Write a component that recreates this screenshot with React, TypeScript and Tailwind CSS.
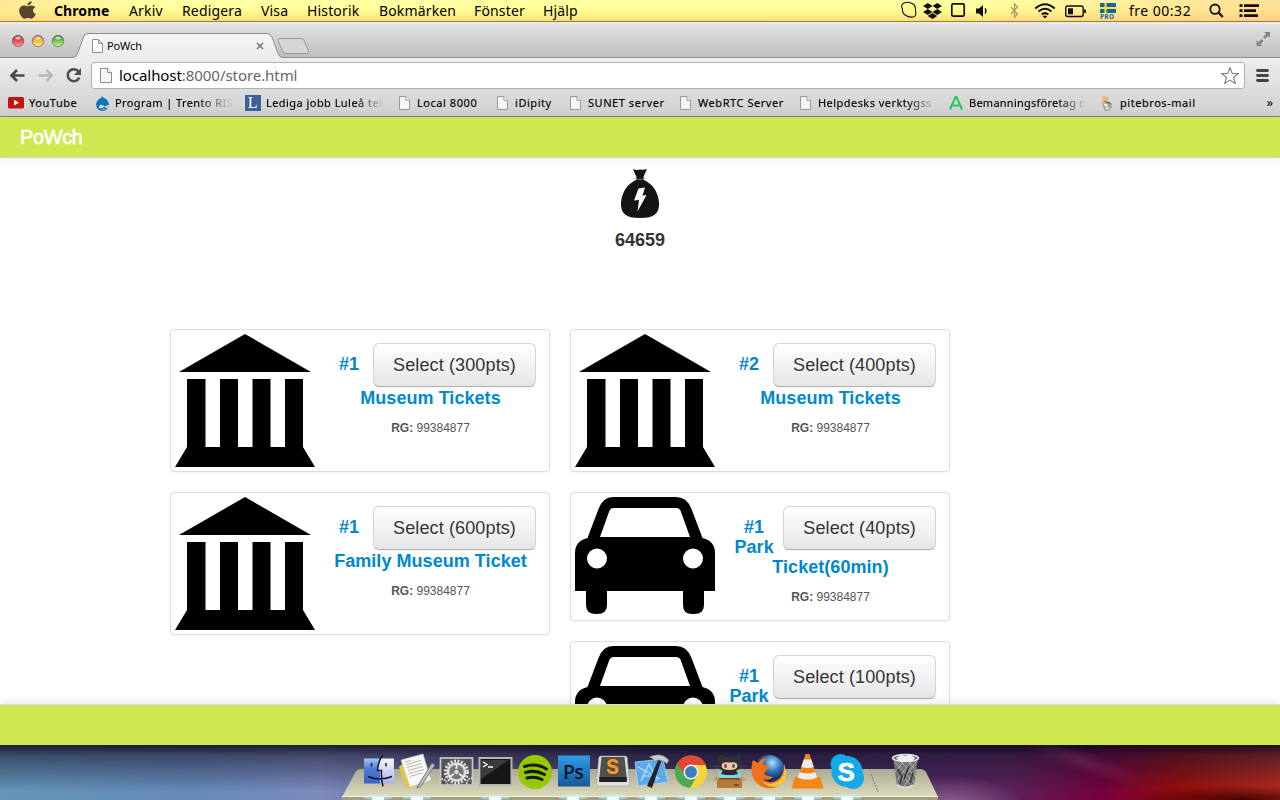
import React from 'react';
import type { ReactNode } from 'react';
import { FaApple, FaDropbox, FaDrupal } from 'react-icons/fa';

function PageIcon({ className }: { className: string }) {
  return (
    <svg viewBox="0 0 12 15" className={className} fill="#f7f7f7" stroke="#8c8c8c" strokeWidth="1">
      <path d="M.5.5H7.5L11.5 4.5V14.5H.5Z" />
      <path d="M7.5.5V4.5H11.5" fill="#fff" />
    </svg>
  );
}

const menus = [
  { label: 'Arkiv', w: 'w-[53px]' },
  { label: 'Redigera', w: 'w-[79px]' },
  { label: 'Visa', w: 'w-[46px]' },
  { label: 'Historik', w: 'w-[72px]' },
  { label: 'Bokmärken', w: 'w-[95px]' },
  { label: 'Fönster', w: 'w-[69px]' },
  { label: 'Hjälp', w: 'w-[60px]' },
];

function MenuBar() {
  return (
    <div className="flex h-[22px] shrink-0 items-center border-b border-[#a07830] bg-[linear-gradient(100deg,rgba(255,215,140,.55),rgba(255,255,140,0)_12%,rgba(255,255,140,0)_75%,rgba(255,190,140,.5)),linear-gradient(#ffffa8,#ffff94_45%,#ffde7c)] text-[14px] tracking-[.15px] text-black">
      <FaApple className="mb-px ml-[19px] h-[20px] w-[17px] text-[#55462a]" preserveAspectRatio="none" />
      <b className="ml-[18px] w-[75px] font-bold tracking-[.1px]">Chrome</b>
      {menus.map((m) => (
        <span key={m.label} className={m.w}>{m.label}</span>
      ))}
      <div className="ml-auto flex h-[22px] items-center">
        <svg width="380" height="22" viewBox="900 0 380 22" fill="none" stroke="#111">
          <path d="M904.500 2.800Q909 1.500 911.500 3.300q4.500 1.500 4 7.500 1.500 5.500-2.500 6.200-4.500.5-7-1.500-4-1.500-3.500-6.500-2.500-4.500 2-6.200Z" strokeWidth="1.100" />
          <rect x="951.800" y="3.800" width="12.400" height="12.400" rx="1.500" strokeWidth="1.700" />
          <path d="M976 8.500h3l4-3.500v12l-4-3.500h-3Z" fill="#111" stroke="none" />
          <path d="M985 8.500q2 2.500 0 5" strokeWidth="1.300" />
          <path d="m1011 7 6.500 7-3 3.500V4l3 3-6.500 7" stroke="#a19766" strokeWidth="1.200" />
          <path d="M1035.300 8.500q9.700-8.500 19.400 0" strokeWidth="2.100" />
          <path d="M1038.500 11.500q6.500-5.500 13 0M1041.700 14.500q3.300-2.700 6.600 0" strokeWidth="2" />
          <path d="m1042.800 16.200 2.200 2.300 2.200-2.300q-2.200-1.500-4.400 0Z" fill="#111" stroke="none" />
          <rect x="1065.700" y="6" width="17.500" height="10.500" rx="2" strokeWidth="1.400" />
          <path d="M1068 8.300h5v6h-5Z" fill="#111" stroke="none" />
          <path d="M1085 9.500v3.500" strokeWidth="1.800" />
          <path d="M1100 3h16v10h-16Z" fill="#17629f" stroke="none" />
          <path d="M1100 8h16M1105.500 3v10" stroke="#ffe33d" strokeWidth="2" />
          <circle cx="1215" cy="9.200" r="4.700" strokeWidth="1.800" />
          <path d="m1218.500 12.500 4.300 4.500" strokeWidth="2.300" />
          <path d="M1244 5.700h15M1244 10.700h12M1244 15.700h14" strokeWidth="2.800" />
          <path d="M1239.500 5.700h3M1239.500 10.700h3M1239.500 15.700h3" strokeWidth="2.800" />
          <text x="1100" y="19.200" fontSize="6.500" fontWeight="700" fill="#17629f" stroke="none" letterSpacing=".3">PRO</text>
          <text x="1129" y="16" fontSize="14" fill="#000" stroke="none" letterSpacing=".5">fre 00:32</text>
          <FaDropbox x="923" y="1.500" size={19} color="#111" />
        </svg>
      </div>
    </div>
  );
}

function TabStrip() {
  return (
    <div className="h-[37px] shrink-0 bg-[linear-gradient(#eee,#dedede_15%,#bdbdbd)]">
      <svg width="1280" height="37" viewBox="0 22 1280 37">
        <defs>
          <linearGradient id="red" x2="0" y2="1"><stop stopColor="#a43a40" /><stop offset=".4" stopColor="#e63f4c" /><stop offset="1" stopColor="#ff9c9c" /></linearGradient>
          <linearGradient id="yellow" x2="0" y2="1"><stop stopColor="#a46b2c" /><stop offset=".4" stopColor="#f3b43b" /><stop offset="1" stopColor="#fff08a" /></linearGradient>
          <linearGradient id="green" x2="0" y2="1"><stop stopColor="#477a37" /><stop offset=".4" stopColor="#62bd47" /><stop offset="1" stopColor="#c8f59c" /></linearGradient>
          <linearGradient id="tab" x2="0" y2="1"><stop stopColor="#f5f5f5" /><stop offset="1" stopColor="#ececec" /></linearGradient>
        </defs>
        <path d="M0 57.500H1280" stroke="#8d8d8d" />
        <path d="M0 58.500H1280" stroke="#f0f0f0" />
        <path d="M70 59V57.500H73q3 0 4.500-4L83.500 37q1.300-3.500 4.500-3.500H267q3.500 0 5 3.500l6 16.500q1.500 4 5 4v1.500Z" fill="url(#tab)" />
        <path d="M70 57.500H73q3 0 4.500-4L83.500 37q1.300-3.500 4.500-3.500H267q3.500 0 5 3.500l6 16.500q1.500 4 5 4" fill="none" stroke="#8d8d8d" />
        <path d="M279 38.500H301q2.500 0 3.500 2.500l4 10q1 2.500-1.500 2.500H286q-2.500 0-3.500-2.500L278 40.500q-.8-2 1-2Z" fill="#d5d5d5" stroke="#999" />
        {['red', 'yellow', 'green'].map((c, i) => (
          <g key={c}>
            <circle cx={18 + i * 20} cy="41" r="5.700" fill={`url(#${c})`} stroke="#68604f" strokeWidth=".7" />
            <ellipse cx={18 + i * 20} cy="38" rx="2.800" ry="1.500" fill="#fff" opacity=".65" />
          </g>
        ))}
        <path d="M92.500 39.500h6l4 4v9h-10ZM98.500 39.500v4h4" fill="#fff" stroke="#919191" />
        <path d="m257 43 6 6m0-6-6 6" stroke="#777" strokeWidth="1.600" />
        <text x="107" y="50" fontSize="11" fill="#000" letterSpacing="-.1">PoWch</text>
        <path d="m1264 32h6v6l-2-2-3 3-2-2 3-3ZM1256.500 40v6h6l-2-2 3-3-2-2-3 3Z" fill="#858585" />
      </svg>
    </div>
  );
}

function Toolbar() {
  return (
    <div className="flex h-[31px] shrink-0 bg-[linear-gradient(#ededed,#dcdcdc)] pt-[3px]">
      <svg width="91" height="28" viewBox="0 62 91 28" fill="none">
        <path d="M24.500 75.500H11.500M17 70l-5.500 5.500L17 81" stroke="#484848" strokeWidth="2.600" />
        <path d="M38.500 75.500H51.500M46.500 70l5.500 5.500-5.500 5.500" stroke="#b5b5b5" strokeWidth="2.300" />
        <path d="M78.500 71.500a6 6 0 1 0 .8 6" stroke="#4d4d4d" strokeWidth="2.500" />
        <path d="M81 68v7h-7Z" fill="#4d4d4d" />
      </svg>
      <div className="flex h-[27px] w-[1154px] items-center rounded-[3px] border border-[#b3b3b3] bg-white pl-[8px] text-[15px] text-[#666]">
        <PageIcon className="h-[15px] w-[12px]" />
        <span className="ml-[7px] tracking-[-.06px]"><span className="text-black">localhost</span>:8000/store.html</span>
        <svg width="20" height="20" viewBox="0 0 20 20" className="mr-[4px] ml-auto" fill="none" stroke="#7d7d7d" strokeWidth="1.100">
          <path d="m10 1.500 2.200 5.900 6.300.2-5 3.900 1.800 6.100-5.300-3.500-5.300 3.500 1.800-6.100-5-3.900 6.300-.2Z" strokeLinejoin="round" />
        </svg>
      </div>
      <svg width="35" height="28" viewBox="1245 62 35 28" stroke="#444" strokeWidth="2.800" strokeLinecap="round">
        <path d="M1257.500 70.500h10M1257.500 75.500h10M1257.500 80.500h10" />
      </svg>
    </div>
  );
}

type Bookmark = { label: string; w: string; iconW?: string; icon?: ReactNode; fade?: string };

const bookmarks: Bookmark[] = [
  {
    label: 'YouTube', w: 'w-[87px]', iconW: 'w-[21px]',
    icon: <svg width="16" height="12" viewBox="0 0 16 12"><rect width="16" height="11.500" rx="1.500" fill="#c4140e" /><path d="m6 3 5 2.700L6 8.500Z" fill="#fff" /></svg>,
  },
  {
    label: 'Program | Trento RIS', w: 'w-[150px]', iconW: 'w-[20px]',
    icon: <FaDrupal className="h-[17px] w-[15px] text-[#0e76b5]" />,
    fade: 'w-[118px] tracking-[.4px] [mask-image:linear-gradient(to_right,#000_70%,transparent)]',
  },
  {
    label: 'Lediga jobb Luleå tek', w: 'w-[154px]', iconW: 'w-[21px]',
    icon: <span className="flex h-[16px] w-[16px] items-center justify-center bg-[#3c6098] font-['Liberation_Serif'] text-[16px] text-white">L</span>,
    fade: 'w-[118px] tracking-[.45px] [mask-image:linear-gradient(to_right,#000_75%,transparent)]',
  },
  { label: 'Local 8000', w: 'w-[98px]' },
  { label: 'iDipity', w: 'w-[73px]' },
  { label: 'SUNET server', w: 'w-[110px]' },
  { label: 'WebRTC Server', w: 'w-[120px]' },
  { label: 'Helpdesks verktygss', w: 'w-[149px]', fade: 'w-[118px] tracking-[.45px] [mask-image:linear-gradient(to_right,#000_75%,transparent)]' },
  {
    label: 'Bemanningsföretag o', w: 'w-[151px]', iconW: 'w-[20px]',
    icon: <svg width="14" height="14" viewBox="0 0 14 14" fill="none" stroke="#22c65b" strokeWidth="2"><path d="M1 13.500 6.500 1h1L13 13.500M4 9.500h6" /></svg>,
    fade: 'w-[118px] tracking-[.25px] [mask-image:linear-gradient(to_right,#000_75%,transparent)]',
  },
  {
    label: 'pitebros-mail', w: 'w-[130px]', iconW: 'w-[20px]',
    icon: (
      <svg width="14" height="17" viewBox="0 0 14 17">
        <path d="m2 1 2 1 2-1 1 2 2-1-1 4H3Z" fill="#f1ae72" />
        <path d="m2 7 5-1 4 3 1 3-3 4H5l-2-4Z" fill="#aaa99c" />
        <path d="m3 8 5 2-2 2Z" fill="#fff" /><path d="m3 6 7 1 2 3-3-1Z" fill="#70813b" /><path d="m5 13 4-1-1 3Z" fill="#fafafa" />
      </svg>
    ),
  },
];

function BookmarkBar() {
  return (
    <div className="flex h-[27px] shrink-0 items-center border-b border-[#858585] bg-[linear-gradient(#dcdcdc,#d0d0d0)] pl-[8px] text-[11px] tracking-[.55px] text-black">
      {bookmarks.map((b) => (
        <div key={b.label} className={`flex shrink-0 items-center ${b.w}`}>
          <span className={`shrink-0 ${b.iconW ?? 'w-[18px]'}`}>
            {b.icon ?? <PageIcon className="h-[14px] w-[11px]" />}
          </span>
          <span className={`whitespace-nowrap [-webkit-text-stroke:.15px_black] ${b.fade ?? ''}`}>{b.label}</span>
        </div>
      ))}
      <span className="mr-[7px] ml-auto text-[13px] tracking-normal">»</span>
    </div>
  );
}

function Museum() {
  return (
    <svg width="140" height="133" viewBox="0 0 140 133" className="block shrink-0">
      <path d="m70 0 66 38H4Z M12 45h18.500v68H45V45h18v68h14.500V45h18v68H110V45h18v68l12 20H0l12-20Z" />
    </svg>
  );
}

function Car() {
  return (
    <svg width="140" height="119" viewBox="0 0 140 119" className="block shrink-0">
      <path
        fillRule="evenodd"
        d="M38 0h63q11 0 15.500 12l11 29q12.500 3 12.500 15v38h-11v14q0 9-10 9h-2q-9 0-9-9V94H32v14q0 9-10 9h-1q-10 0-10-9V94H0V56q0-12 12.500-15l11-29Q28 0 38 0Zm.5 11q-3 0-4 2.500L25 40h90l-9.500-26.500q-1-2.500-4-2.500ZM22 51.500a10 10 0 1 0 0 20 10 10 0 0 0 0-20Zm96 0a10 10 0 1 0 0 20 10 10 0 0 0 0-20Z"
      />
    </svg>
  );
}

type Ticket = { kind: 'museum' | 'car'; title: string; points: number };

function TicketCard({ kind, title, points }: Ticket) {
  return (
    <div className="flex rounded-[4px] border border-[#ddd] bg-white p-[4px] shadow-[0_1px_3px_rgba(0,0,0,.055)]">
      {kind === 'museum' ? <Museum /> : <Car />}
      <div className="ml-[10px] w-[211px] pt-[9px] text-center">
        <button className="float-right mb-px h-[44px] rounded-[6px] border border-[#d4d4d4] border-b-[#b3b3b3] bg-[linear-gradient(#fff,#e6e6e6)] px-[19px] text-[18px] leading-[20px] tracking-[.12px] text-[#333] shadow-[inset_0_1px_0_rgba(255,255,255,.2),0_1px_2px_rgba(0,0,0,.05)] [text-shadow:0_1px_1px_rgba(255,255,255,.75)]">
          Select ({points}pts)
        </button>
        <h3 className="pt-[11px] text-[18px] leading-[20px] font-bold tracking-[.05px] text-[#0088cc]">{title}</h3>
        <p className="mt-[10px] text-[12px] leading-[20px] text-[#555]"><b>RG:</b> 99384877</p>
      </div>
    </div>
  );
}

const columns: Ticket[][] = [
  [
    { kind: 'museum', title: '#1 Museum Tickets', points: 300 },
    { kind: 'museum', title: '#1 Family Museum Ticket', points: 600 },
  ],
  [
    { kind: 'museum', title: '#2 Museum Tickets', points: 400 },
    { kind: 'car', title: '#1 Park Ticket(60min)', points: 40 },
    { kind: 'car', title: '#1 Park', points: 100 },
  ],
];

function Store() {
  return (
    <div className="flex h-[628px] shrink-0 flex-col bg-white font-['Liberation_Sans',Arial,sans-serif]">
      <header className="z-10 flex h-[41px] shrink-0 items-center border-b border-[#d4d4d4] bg-[#d0e850] pl-[20px] text-[20px] tracking-[-.4px] text-white shadow-[0_1px_10px_rgba(0,0,0,.1)] [-webkit-text-stroke:.6px_white]">PoWch</header>
      <main className="h-[546px] overflow-hidden">
        <div className="flex h-[171px] flex-col items-center pt-[10px]">
          <svg width="40" height="51" viewBox="0 0 40 51">
            <path d="M13 1q3 1.500 7 .5 4 .5 7-.5-2 4-3.500 8l.5 3q13 6 15 22 .5 9-4 12.500Q31 50 20 50T5 46.500Q.5 43 1 34q2-16 15-22l.5-3Q14 4 13 1Z" fill="#141414" />
            <path d="M16 11.300h8" stroke="#777" />
            <path d="m18.500 20.500 6.500-1-2.500 8 4-.5-9 16.500 1.500-11.500-5 .5Z" fill="#fff" />
          </svg>
          <div className="mt-[11px] text-[18px] leading-[20px] font-bold text-[#333]">64659</div>
        </div>
        <div className="flex items-start gap-[20px] pl-[170px]">
          {columns.map((col, i) => (
            <div key={i} className="flex w-[380px] shrink-0 flex-col gap-[20px]">
              {col.map((t) => <TicketCard key={t.points} {...t} />)}
            </div>
          ))}
        </div>
      </main>
      <footer className="z-10 h-[41px] shrink-0 border-t border-[#d4d4d4] bg-[#d0e850] shadow-[0_-1px_10px_rgba(0,0,0,.1)]" />
    </div>
  );
}

const dockIcons: { name: string; art: ReactNode }[] = [
  {
    name: 'finder',
    art: <>
      <path d="M5 6.500h16l-3 11 3 2v12H5Z" fill="url(#finderL)" /><path d="M21 6.500h14v25H21v-12l-3-.5Z" fill="url(#finderR)" />
      <path d="M23.500 3q-4.500 7-5 15.500h4q-.5 9 1.500 16M9 24.500q11 5 24 0M12.500 11v3.500M27 11v3.500" fill="none" stroke="#15182b" strokeWidth="1.500" />
    </>,
  },
  {
    name: 'textedit',
    art: <>
      <path d="m1 15 8 21 8-1L8 8Z" fill="#e7c637" /><path d="m3 8 22-6 8 26-21 7Z" fill="#f8f8f5" stroke="#c6c6c6" strokeWidth=".6" />
      <path d="m7 10 6-1.500m-5 4 15-4m-14 7 15-4m-14 7 15-4m-14 7 15-4m-14 7 12-3.500" stroke="#999" strokeWidth=".7" />
      <path d="m34 11-13 21-2 4 4-2 14-21Z" fill="#b9bcc0" stroke="#61656a" strokeWidth=".8" />
    </>,
  },
  {
    name: 'settings',
    art: <>
      <rect x="3.500" y="6" width="32" height="27" fill="#555" stroke="#c8c8c8" strokeWidth="1.700" />
      <circle cx="19.500" cy="20" r="11" fill="none" stroke="#e0e0e0" strokeWidth="3" strokeDasharray="2 1.500" />
      <circle cx="19.500" cy="20" r="8.500" fill="#777" stroke="#dedede" strokeWidth="2.500" />
      <path d="m19.500 20 0-8m0 8-7 5m7-5 7 5" stroke="#eee" strokeWidth="2" /><circle cx="19.500" cy="20" r="2.800" fill="#ddd" stroke="#666" />
      <path d="M4.500 27q4 0 6 5m25-6q-5 0-6 6" fill="none" stroke="#ddd" strokeWidth="2" strokeDasharray="1.500 1" />
    </>,
  },
  {
    name: 'terminal',
    art: <>
      <rect x="3.500" y="6" width="32" height="27" fill="#171717" stroke="#b6b6b6" strokeWidth="2" />
      <path d="M5 8h28L5 27Z" fill="#3a3a3a" /><path d="m7 10 4 2.500L7 15m5 0h5" fill="none" stroke="#fff" strokeWidth="1.300" />
    </>,
  },
  {
    name: 'music',
    art: <>
      <circle cx="20" cy="20" r="17" fill="#96c800" />
      <path d="M9.500 14.500q12-4 22 2.500M10.500 20.500q10-3 19 2M12 26q8-2 15 1.500" fill="none" stroke="#151a08" strokeWidth="3" strokeLinecap="round" />
    </>,
  },
  {
    name: 'photoshop',
    art: <>
      <rect x="4" y="3.500" width="32" height="31" fill="url(#ps)" />
      <text x="9" y="26.500" fontSize="19.500" fontWeight="600" letterSpacing="-.8" fill="#07162b" fontFamily="Open Sans">Ps</text>
    </>,
  },
  {
    name: 'sublime',
    art: <>
      <path d="M8 4h24q2 0 2.300 2l2.200 25q0 3-2 3h-29q-2 0-2-3L5.700 6Q6 4 8 4Z" fill="#dedede" stroke="#999" strokeWidth=".5" />
      <path d="M8.500 5h23l2 19v6h-27v-6Z" fill="#4f4f4f" /><path d="M6.300 25h27.400v5H6.300Z" fill="#202020" />
      <text x="13" y="22" fontSize="20" fontWeight="700" fill="#ff981e" fontFamily="Inter">S</text>
    </>,
  },
  {
    name: 'xcode',
    art: <>
      <path d="m3 10 28-3 5 23-30 4Z" fill="#5ca9ed" stroke="#b4dcff" strokeWidth=".7" />
      <path d="m9 29 8-17 8 17M10 24h15M6 15l22 12" fill="none" stroke="#bce1ff" strokeWidth="1.200" />
      <path d="m30 7-10 29-5-2 12-28Z" fill="#252525" /><path d="M17 5q8-4 15-1l5 4-2 4-4-3-6-1-3 2-1-3Z" fill="#c7c9ca" stroke="#555" strokeWidth=".5" />
    </>,
  },
  {
    name: 'chrome',
    art: <>
      <circle cx="20" cy="20" r="16" fill="#f8d33a" />
      <path d="M20 13 6 12a16 16 0 0 0 13 24l7-12Z" fill="#51a852" /><path d="M6 12A16 16 0 0 1 35 13H20q-7 0-7 8Z" fill="#df4936" />
      <circle cx="20" cy="20" r="7.500" fill="#f2f2f2" /><circle cx="20" cy="20" r="6" fill="#397ebf" />
    </>,
  },
  {
    name: 'octocat',
    art: <>
      <path d="M3 14l8 1M3 17l8-1M36 14l-8 1M36 17l-8-1" stroke="#55525a" strokeWidth=".6" />
      <path d="M9 2.500Q12 2 15.500 5h8Q27 2 30 2.500q1.500 3 .5 6 2 9-6 10.500h-10q-8-1.500-6-10.500-1-3 .5-6Z" fill="#303137" />
      <path d="M12 12q1-2.500 7.500-1.500Q26 9.500 27 12q2 6-7.500 6T12 12Z" fill="#efc7ae" />
      <ellipse cx="15.500" cy="14" rx="1.400" ry="2" fill="#74483a" /><ellipse cx="23.500" cy="14" rx="1.400" ry="2" fill="#74483a" />
      <path d="m6 25 4-6h19l4 6-3 3H10Z" fill="#80d1e1" />
      <path d="M13 18h13l2 4-5 1h-7l-5-1Z" fill="#292b30" />
      <path d="M7 26h25v10H7Z" fill="#b57a38" /><path d="M7 26h25v1.500H7Z" fill="#724616" />
      <path d="m7 24-4 4 4 1 3-3Zm25 0 4 4-4 1-3-3Z" fill="#d09650" /><path d="M24 32h5v2h-5Z" fill="#805021" />
    </>,
  },
  {
    name: 'firefox',
    art: <>
      <circle cx="20" cy="19" r="16" fill="url(#globe)" />
      <path d="M4 8q-4 13 2 21 7 9 19 7 11-3 12-15l-2-9q0 12-7 16-8 5-14-1 7 2 10-2-5 0-9-3 2-5 6-6-2-3-7-3 0-4 4-7-6 0-9 5Z" fill="#ef711b" />
      <path d="M35 12q2 13-7 18-8 4-15-1 7 8 16 5 9-4 8-14Z" fill="#ffc73b" />
    </>,
  },
  {
    name: 'vlc',
    art: <>
      <path d="M6.500 25h26l3 11.500h-32Z" fill="#f58717" /><path d="m17.500 2h4l8 25q-10 6-20 0Z" fill="#f58515" />
      <path d="M15.700 7.500h7.600l2.400 7.500q-6 2-12.400 0ZM11.700 20q8 3 15.600 0l1.800 5.500q-9.500 4.500-19.200 0Z" fill="#eee" />
    </>,
  },
  {
    name: 'skype',
    art: <>
      <circle cx="13.500" cy="12" r="10" fill="#14a9e7" /><circle cx="26" cy="26" r="11" fill="#14a9e7" /><circle cx="20" cy="19.500" r="15.500" fill="#14a9e7" />
      <text x="10.500" y="28.500" fontSize="26" fontWeight="700" fill="#fff" stroke="#fff" strokeWidth=".6" fontFamily="Liberation Sans">S</text>
    </>,
  },
];

const runningMarks = [378, 417, 495, 573, 613, 651, 691, 730, 769, 808, 847];

function Dock() {
  return (
    <div className="relative h-[55px] shrink-0 overflow-hidden bg-[linear-gradient(rgba(14,10,32,.85)_0,rgba(25,20,45,.55)_20%,rgba(25,20,45,0)_85%),linear-gradient(90deg,#6396b8_0,#6689b9_15%,#7c8bbd_25%,#686795_35%,#3e3158_55%,#4b285f_72%,#5b2258_79%,#75003e_86%,#980e0b_92%,#b82c1c)]">
      <svg width="1280" height="55" viewBox="0 745 1280 55" className="absolute inset-0">
        <defs>
          <linearGradient id="shelf" x2="0" y2="1"><stop stopColor="#aaa995" /><stop offset="1" stopColor="#dddcb9" /></linearGradient>
          <radialGradient id="streak"><stop stopColor="#9a5080" stopOpacity=".25" /><stop offset="1" stopColor="#93447c" stopOpacity="0" /></radialGradient>
          <radialGradient id="glow"><stop stopColor="#a978a2" stopOpacity=".7" /><stop offset="1" stopColor="#a978a2" stopOpacity="0" /></radialGradient>
          <radialGradient id="maroon"><stop stopColor="#390000" stopOpacity=".9" /><stop offset="1" stopColor="#390000" stopOpacity="0" /></radialGradient>
        </defs>
        <ellipse cx="1085" cy="762" rx="70" ry="12" fill="url(#streak)" transform="rotate(18 1085 762)" />
        <ellipse cx="950" cy="804" rx="75" ry="28" fill="url(#glow)" />
        <ellipse cx="1240" cy="800" rx="120" ry="15" fill="url(#maroon)" />
        <path d="M361 769h559q4 0 6 3l12 25H342l13-24q2-4 6-4Z" fill="url(#shelf)" />
        <path d="M342 797h596v3H342Z" fill="#9f9e82" />
        <path d="M342 796.500h596" stroke="#f5f5e5" />
        {runningMarks.map((x) => (
          <g key={x}>
            <ellipse cx={x} cy="797" rx="15" ry="3" fill="#c6efff" opacity=".5" />
            <rect x={x - 6} y="797" width="12" height="3" rx="1" fill="#f0ffff" />
          </g>
        ))}
        <path d="m871 774 7 18" stroke="#8b8977" strokeWidth="1.200" strokeDasharray="2 1" />
      </svg>
      <div className="relative flex pt-[7px] pl-[359px]">
        {dockIcons.map((d) => (
          <svg key={d.name} width="39" height="40" viewBox="0 0 39 40" className="shrink-0">
            <defs>
              {d.name === 'finder' && <linearGradient id="finderL" x2="0" y2="1"><stop stopColor="#9fc8f4" /><stop offset=".4" stopColor="#547bd4" /><stop offset="1" stopColor="#3563c4" /></linearGradient>}
              {d.name === 'finder' && <linearGradient id="finderR" x2="0" y2="1"><stop stopColor="#f5f5ff" /><stop offset="1" stopColor="#aab4e2" /></linearGradient>}
              {d.name === 'photoshop' && <linearGradient id="ps" x2="0" y2="1"><stop stopColor="#2f9ce5" /><stop offset="1" stopColor="#175999" /></linearGradient>}
              {d.name === 'firefox' && <radialGradient id="globe" cx=".6" cy=".25"><stop stopColor="#a9e5fb" /><stop offset=".5" stopColor="#3979bd" /><stop offset="1" stopColor="#142e6c" /></radialGradient>}
            </defs>
            {d.art}
          </svg>
        ))}
        <svg width="39" height="40" viewBox="0 0 39 40" className="ml-[20px] shrink-0">
          <path d="m7 6 4 27q8 5 17 0l4-27Z" fill="#737373" />
          <path d="m9 10 20 22M12 7l18 18M20 7l9 10M10 17l16 17M31 9 12 33M26 9 11 28M18 9 9 20m21-2L18 34" stroke="#bfbfbf" strokeWidth=".8" />
          <path d="m11 17 5 7-2 8m9-18-5 13m9-6-3 10" fill="none" stroke="#333" strokeWidth="1.500" />
          <ellipse cx="19.500" cy="6" rx="13" ry="3.500" fill="#666" stroke="#e4e4e8" strokeWidth="1.500" />
          <path d="m10 6 5-3 5 1 4-2 5 4-3 4-6-1-6 1Z" fill="#eee" />
          <path d="M11 33q8 5 17 0" fill="none" stroke="#d8d8e5" strokeWidth="2" />
        </svg>
      </div>
    </div>
  );
}

export default function App() {
  return (
    <div className="flex h-[800px] w-[1280px] flex-col overflow-hidden font-['Noto_Sans','DejaVu_Sans',sans-serif]">
      <MenuBar />
      <TabStrip />
      <Toolbar />
      <BookmarkBar />
      <Store />
      <Dock />
    </div>
  );
}
